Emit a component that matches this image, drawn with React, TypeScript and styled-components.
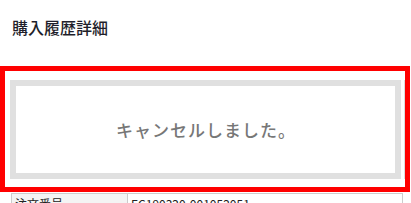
import React from "react";
import styled, { createGlobalStyle } from "styled-components";

const Global = createGlobalStyle`
  html, body { margin: 0; padding: 0; background: #ffffff; }
  body {
    font-family: "Noto Sans CJK JP", "Noto Sans", sans-serif;
    width: 411px;
    height: 203px;
    overflow: hidden;
  }
`;

const Page = styled.div`
  display: flex;
  flex-direction: column;
  width: 411px;
`;

const Title = styled.h1`
  margin: 0;
  padding: 19px 0 0 12px;
  height: 66px;
  box-sizing: border-box;
  font-size: 16px;
  line-height: 16px;
  font-weight: 500;
  color: #1f1f2b;
`;

const Highlight = styled.div`
  width: 410px;
  box-sizing: border-box;
  border: 5px solid #ff0000;
  padding: 9px 0 8px 5px;
`;

const Inner = styled.div`
  display: flex;
  padding-right: 2px;
  border-right: 1px solid #dcdcdc;
`;

const Notice = styled.div`
  flex: 0 0 391px;
  height: 99px;
  box-sizing: border-box;
  border: 6px solid #e0e0e0;
  background: #ffffff;
  display: flex;
  align-items: center;
  justify-content: center;
  font-size: 17px;
  font-weight: 500;
  letter-spacing: 1px;
  color: #777777;
  padding-left: 1px;
`;

const Table = styled.div`
  margin: 1px 0 0 11px;
  width: 390px;
  display: grid;
  grid-template-columns: 116px 1fr;
  border: 1px solid #cccccc;
  border-bottom: none;
  font-family: "Noto Sans CJK JP", "Liberation Sans", sans-serif;
  font-size: 12px;
  line-height: 18px;
  color: #222222;
`;

const Cell = styled.div<{ $head?: boolean }>`
  padding: 1px 3px 0;
  background: ${(p) => (p.$head ? "#f4f4f4" : "#ffffff")};
  border-right: ${(p) => (p.$head ? "1px solid #cccccc" : "none")};
  white-space: nowrap;
`;

export default function App() {
  return (
    <Page>
      <Global />
      <Title>購入履歴詳細</Title>
      <Highlight>
        <Inner>
          <Notice>キャンセルしました。</Notice>
        </Inner>
      </Highlight>
      <Table>
        <Cell $head>注文番号</Cell>
        <Cell>EC190320-001052051</Cell>
      </Table>
    </Page>
  );
}
